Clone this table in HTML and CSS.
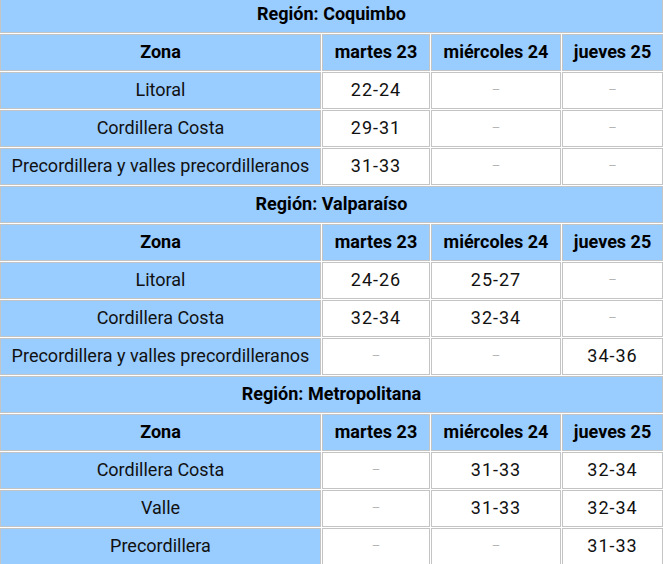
FILE: index.html
```html
<!DOCTYPE html>
<html lang="es">
<head>
<meta charset="utf-8">
<title>Temperaturas</title>
<link rel="stylesheet" href="styles.css">
</head>
<body>
<table class="temps">
  <colgroup>
    <col class="c-zona"><col class="c-mar"><col class="c-mie"><col class="c-jue">
  </colgroup>
  <tbody>
    <tr><th class="region" colspan="4">Región: Coquimbo</th></tr>
    <tr><th>Zona</th><th>martes 23</th><th>miércoles 24</th><th>jueves 25</th></tr>
    <tr><td class="zona">Litoral</td><td>22-24</td><td class="na">–</td><td class="na">–</td></tr>
    <tr><td class="zona">Cordillera Costa</td><td>29-31</td><td class="na">–</td><td class="na">–</td></tr>
    <tr><td class="zona">Precordillera y valles precordilleranos</td><td>31-33</td><td class="na">–</td><td class="na">–</td></tr>

    <tr><th class="region" colspan="4">Región: Valparaíso</th></tr>
    <tr><th>Zona</th><th>martes 23</th><th>miércoles 24</th><th>jueves 25</th></tr>
    <tr><td class="zona">Litoral</td><td>24-26</td><td>25-27</td><td class="na">–</td></tr>
    <tr><td class="zona">Cordillera Costa</td><td>32-34</td><td>32-34</td><td class="na">–</td></tr>
    <tr><td class="zona">Precordillera y valles precordilleranos</td><td class="na">–</td><td class="na">–</td><td>34-36</td></tr>

    <tr><th class="region" colspan="4">Región: Metropolitana</th></tr>
    <tr><th>Zona</th><th>martes 23</th><th>miércoles 24</th><th>jueves 25</th></tr>
    <tr><td class="zona">Cordillera Costa</td><td class="na">–</td><td>31-33</td><td>32-34</td></tr>
    <tr><td class="zona">Valle</td><td class="na">–</td><td>31-33</td><td>32-34</td></tr>
    <tr><td class="zona">Precordillera</td><td class="na">–</td><td class="na">–</td><td>31-33</td></tr>
  </tbody>
</table>
</body>
</html>
```

FILE: styles.css
```css
html, body {
  margin: 0;
  padding: 0;
  background: #ffffff;
  overflow: hidden;
}

.temps {
  margin: -5px 0 0 -1px;
  width: 665px;
  table-layout: fixed;
  border-collapse: separate;
  border-spacing: 1px;
  font-family: Roboto, "Noto Sans", sans-serif;
  font-size: 18px;
  color: #111;
}

.c-zona { width: 321px; }
.c-mar { width: 108px; }
.c-mie { width: 130px; }
.c-jue { width: 101px; }

.temps th,
.temps td {
  box-sizing: border-box;
  height: 37px;
  padding: 0 2px 2px;
  border: 1px solid #c4c4c4;
  text-align: center;
  vertical-align: middle;
  white-space: nowrap;
  line-height: 24px;
}

.temps th {
  background: #99ccff;
  font-weight: bold;
  color: #000;
}

.temps td {
  background: #ffffff;
  letter-spacing: 1px;
}

.temps td.zona {
  background: #99ccff;
  letter-spacing: 0;
}

.temps td.na {
  color: #b5b5b5;
  font-size: 13px;
  letter-spacing: 0;
}
```
